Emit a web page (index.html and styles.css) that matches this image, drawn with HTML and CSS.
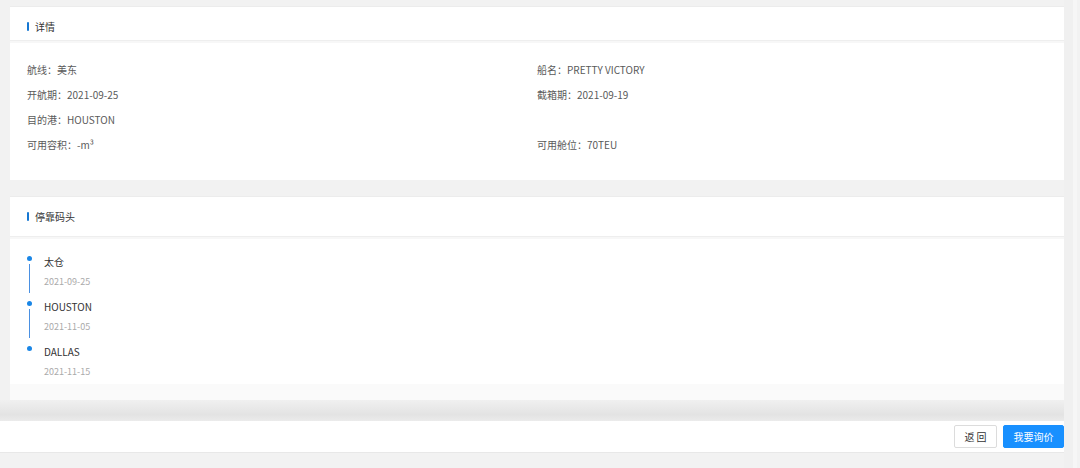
FILE: index.html
```html
<!DOCTYPE html>
<html lang="zh">
<head>
<meta charset="utf-8">
<link rel="stylesheet" href="styles.css">
</head>
<body>
<div class="page">
  <div class="main">
    <section class="card">
      <div class="card-head"><span class="bar"></span>详情</div>
      <div class="detail">
        <div class="row"><span>航线：美东</span><span>船名：PRETTY VICTORY</span></div>
        <div class="row"><span>开航期：2021-09-25</span><span>截箱期：2021-09-19</span></div>
        <div class="row"><span>目的港：HOUSTON</span><span></span></div>
        <div class="row"><span>可用容积：-m³</span><span>可用舱位：70TEU</span></div>
      </div>
    </section>
    <section class="card card2">
      <div class="card-head head2"><span class="bar"></span>停靠码头</div>
      <ul class="timeline">
        <li class="item"><div class="rail"><span class="dot"></span><span class="line"></span></div><div class="info"><div class="name">太仓</div><div class="date">2021-09-25</div></div></li>
        <li class="item"><div class="rail"><span class="dot"></span><span class="line"></span></div><div class="info"><div class="name">HOUSTON</div><div class="date">2021-11-05</div></div></li>
        <li class="item last"><div class="rail"><span class="dot"></span></div><div class="info"><div class="name">DALLAS</div><div class="date">2021-11-15</div></div></li>
      </ul>
    </section>
    <div class="shade"></div>
    <footer class="footer">
      <button class="btn">返 回</button>
      <button class="btn primary">我要询价</button>
    </footer>
  </div>
  <div class="scroll"></div>
</div>
</body>
</html>
```
FILE: styles.css
```css
html, body { margin: 0; padding: 0; }
body {
  background: #f2f2f2;
  font-family: "Noto Sans CJK SC", "Microsoft YaHei", sans-serif;
  width: 1080px;
  height: 468px;
  overflow: hidden;
}
.page { display: flex; height: 468px; }
.main { width: 1064px; display: flex; flex-direction: column; }
.scroll { flex: 1; background: linear-gradient(90deg, #f0f0f0 0, #f0f0f0 9px, #f6f6f6 9px, #f6f6f6 13px, #f2f2f2 13px); }
.card {
  background: #fff;
  margin: 6px 0 0 10px;
  border-top: 1px solid #ececec;
}
.card2 {
  margin-top: 16px;
  height: 204px;
  box-sizing: border-box;
  background: linear-gradient(#fff 0, #fff 187px, #fafafa 187px);
}
.card-head {
  height: 34px;
  box-sizing: border-box;
  display: flex;
  align-items: center;
  padding: 6px 0 0 17px;
  font-size: 10px;
  color: #333;
  border-bottom: 1px solid #eeeeee;
  box-shadow: 0 2px 0 #f7f7f7;
}
.head2 { height: 40px; padding-top: 0; }
.bar { width: 2px; height: 9px; background: #1677d2; margin-right: 6px; border-radius: 1px; }
.detail { padding: 17px 17px 22px; font-size: 10px; color: #5a5a5a; }
.row { display: grid; grid-template-columns: 510px 1fr; height: 25px; line-height: 24px; }
.timeline { list-style: none; margin: 0; padding: 13px 17px 0 17px; }
.item { display: flex; height: 45px; }
.item.last { height: 42px; }
.rail { width: 17px; display: flex; flex-direction: column; align-items: center; padding-top: 6px; box-sizing: border-box; }
.dot { width: 5px; height: 5px; border-radius: 50%; background: #1a86e6; margin-left: -12px; flex: none; }
.line { width: 1px; flex: 1; background: #4a90e2; margin: 3px 0 2px -12px; }
.info { padding-top: 4px; }
.name { font-size: 10px; color: #333; line-height: 16px; }
.date { font-size: 9px; color: #aaa; line-height: 23px; }
.shade { height: 21px; background: linear-gradient(#f0f0f0, #e3e3e3 70%, #ebebeb); }
.footer {
  height: 31px;
  background: #fff;
  display: flex;
  justify-content: flex-end;
  align-items: center;
  gap: 6px;
  border-bottom: 1px solid #e8e8e8;
}
.btn {
  height: 23px;
  padding: 0;
  width: 43px;
  white-space: nowrap;
  font-family: inherit;
  font-size: 10px;
  border: 1px solid #dcdcdc;
  background: #fff;
  color: #333;
  border-radius: 2px;
  cursor: pointer;
}
.btn.primary { background: #1890ff; border-color: #1890ff; color: #fff; width: 61px; }
```
